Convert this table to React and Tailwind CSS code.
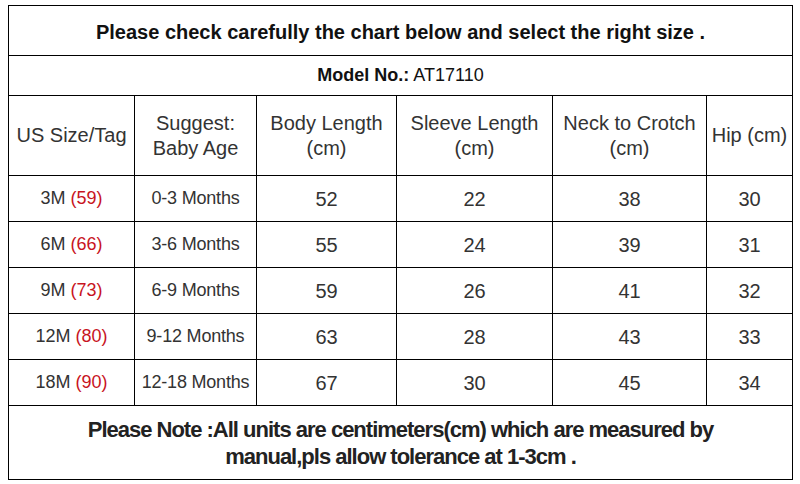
const rows = [
  ["3M", "59", "0-3 Months", 52, 22, 38, 30],
  ["6M", "66", "3-6 Months", 55, 24, 39, 31],
  ["9M", "73", "6-9 Months", 59, 26, 41, 32],
  ["12M", "80", "9-12 Months", 63, 28, 43, 33],
  ["18M", "90", "12-18 Months", 67, 30, 45, 34],
];

export default function App() {
  return (
    <div className="w-[800px] h-[484px] bg-white pl-[8px] pt-[5px]" style={{ fontFamily: '"Liberation Sans", Arial, sans-serif' }}>
      <table className="w-[784px] border-collapse text-[#333] text-center table-fixed">
        <colgroup>
          <col className="w-[126px]" />
          <col className="w-[122px]" />
          <col className="w-[140px]" />
          <col className="w-[156px]" />
          <col className="w-[154px]" />
          <col className="w-[86px]" />
        </colgroup>
        <tbody>
          <tr className="h-[50px]">
            <td colSpan={6} className="border border-black text-[20px] font-bold text-[#111] pt-[2px]">
              Please check carefully the chart below and select the right size .
            </td>
          </tr>
          <tr className="h-[40px]">
            <td colSpan={6} className="border border-black text-[18px] text-[#111]">
              <span className="font-bold">Model No.:</span> AT17110
            </td>
          </tr>
          <tr className="h-[80px] text-[20px] leading-[25px]">
            <td className="border border-black">US Size/Tag</td>
            <td className="border border-black">Suggest:<br />Baby Age</td>
            <td className="border border-black">Body Length<br />(cm)</td>
            <td className="border border-black">Sleeve Length<br />(cm)</td>
            <td className="border border-black">Neck to Crotch<br />(cm)</td>
            <td className="border border-black">Hip (cm)</td>
          </tr>
          {rows.map((r) => (
            <tr key={r[0]} className="h-[46px]">
              <td className="border border-black text-[18px]">
                {r[0]} <span className="text-[#c8141e]">({r[1]})</span>
              </td>
              <td className="border border-black text-[18px] tracking-[-0.2px]">{r[2]}</td>
              <td className="border border-black text-[20px]">{r[3]}</td>
              <td className="border border-black text-[20px]">{r[4]}</td>
              <td className="border border-black text-[20px]">{r[5]}</td>
              <td className="border border-black text-[20px]">{r[6]}</td>
            </tr>
          ))}
          <tr className="h-[74px]">
            <td colSpan={6} className="border border-black text-[22px] font-bold leading-[27px] tracking-[-1px] text-[#222]">
              Please Note :All units are centimeters(cm) which are measured by<br />
              manual,pls allow tolerance at 1-3cm .
            </td>
          </tr>
        </tbody>
      </table>
    </div>
  );
}
